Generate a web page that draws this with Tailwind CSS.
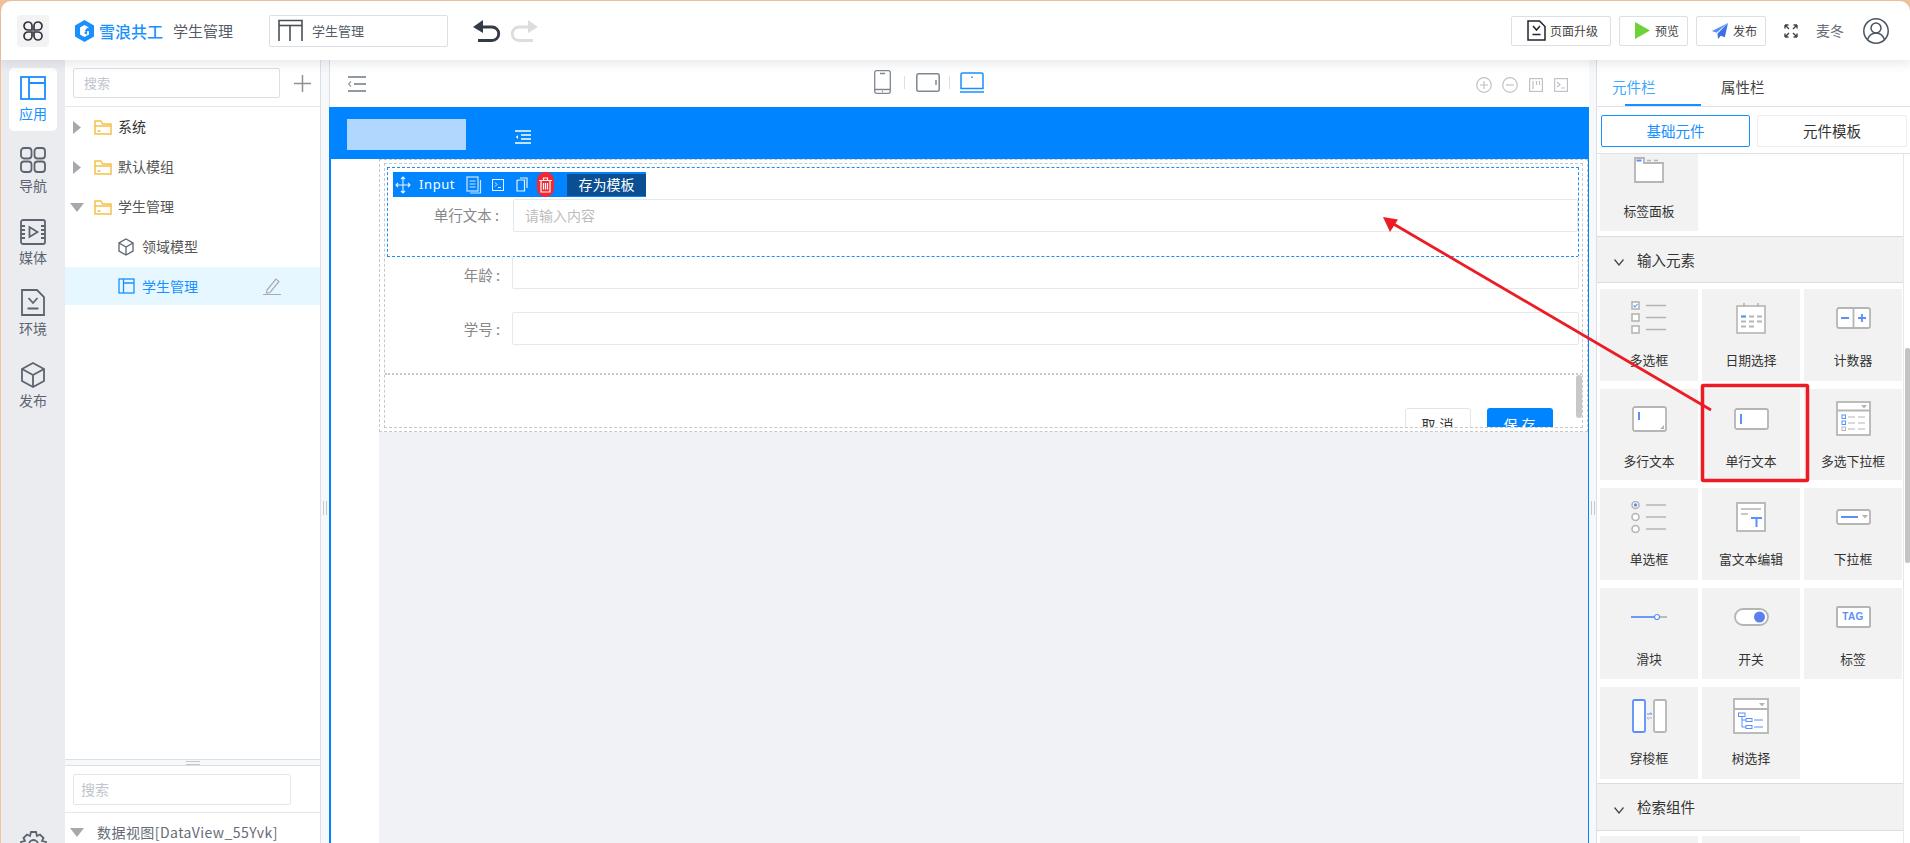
<!DOCTYPE html>
<html lang="zh-CN">
<head>
<meta charset="utf-8">
<title>学生管理</title>
<script src="https://cdn.jsdelivr.net/npm/@tailwindcss/browser@4"></script>
</head>
<body class="m-0 overflow-hidden bg-[#f2c49a]">
<div class="relative w-[1910px] h-[843px] overflow-hidden flex flex-col pl-px pt-px font-['Noto_Sans_CJK_SC','Noto_Sans',sans-serif] text-[#333] text-[14px]">

  <!-- top bar -->
  <header class="relative z-10 h-[59px] w-[1909px] shrink-0 bg-white rounded-tl-[10px] rounded-tr-[10px] shadow-[0_3px_12px_rgba(60,70,90,0.14)] flex items-center">
    <div class="ml-[16px] w-[32px] h-[32px] rounded-[4px] bg-[#f3f3f4] flex items-center justify-center">
      <svg width="20" height="20" viewBox="0 0 20 20" fill="none" stroke="#33363f" stroke-width="1.700"><path d="M9 9H5a4 4 0 1 1 4-4z"/><path d="M11 9h4a4 4 0 1 0-4-4z"/><path d="M9 11H5a4 4 0 1 0 4 4z"/><path d="M11 11h4a4 4 0 1 1-4 4z"/></svg>
    </div>
    <svg class="ml-[26px]" width="19" height="22" viewBox="0 0 19 22"><path d="M9.500 0 19 5.500v11L9.500 22 0 16.500v-11z" fill="#1890ff"/><path d="M14 7.500 9.500 5 5 7.600v6.800L9.500 17l4.500-2.600v-3.200H9.500l2-2.600z" fill="#fff"/><path d="M12 10.500 9 13l3 1.800z" fill="#1890ff"/></svg>
    <span class="ml-[5px] w-[64px] text-[16px] leading-[22px] font-medium text-[#1890ff] whitespace-nowrap">雪浪共工</span>
    <span class="ml-[10px] w-[60px] text-[15px] leading-[22px] text-[#555b66] whitespace-nowrap">学生管理</span>
    <div class="ml-[36px] w-[179px] h-[32px] border border-[#dcdfe6] rounded-[2px] flex items-center pl-[8px]">
      <svg width="25" height="23" viewBox="0 0 25 23" fill="none" stroke="#4a4f58" stroke-width="1.600"><path d="M1 22V1.500h23V22"/><path d="M1 6.500h23"/><path d="M12 6.500V22"/></svg>
      <span class="ml-[9px] text-[13px] text-[#555b66]">学生管理</span>
    </div>
    <svg class="ml-[25px]" width="28" height="22" viewBox="0 0 28 22" fill="none" stroke="#333a48" stroke-width="2.800"><path d="M8 7h11a6.600 6.600 0 0 1 0 13.500H5"/><path d="M10 0v13L0 7z" fill="#333a48" stroke="none"/></svg>
    <svg class="ml-[9px]" width="28" height="22" viewBox="0 0 28 22" fill="none" stroke="#dcdde0" stroke-width="2.800"><path d="M20 7H9a6.600 6.600 0 0 0 0 13.500h14"/><path d="M18 0v13L28 7z" fill="#dcdde0" stroke="none"/></svg>

    <div class="ml-auto flex items-center">
      <button class="w-[100px] h-[30px] border border-[#dcdfe6] rounded-[2px] flex items-center pl-[15px] text-[12px] text-[#444]">
        <svg width="19" height="21" viewBox="0 0 19 21" fill="none" stroke="#22252b" stroke-width="1.500"><path d="M1 1h11.500L18 6.500V20H1z"/><path d="m6 6 3.500 4L13 6M5.500 14.500h8"/></svg>
        <span class="ml-[4px]">页面升级</span>
      </button>
      <button class="ml-[8px] w-[69px] h-[30px] border border-[#dcdfe6] rounded-[2px] flex items-center pl-[15px] text-[12px] text-[#444]">
        <svg width="15" height="17" viewBox="0 0 15 17"><path d="M0 0 15 8.500 0 17z" fill="#6fd13a"/></svg>
        <span class="ml-[5px]">预览</span>
      </button>
      <button class="ml-[8px] w-[70px] h-[30px] border border-[#dcdfe6] rounded-[2px] flex items-center pl-[15px] text-[12px] text-[#444]">
        <svg width="16" height="16" viewBox="0 0 16 16"><path d="M16 0 0 8l4.500 1.800L16 0z" fill="#5b8ff9"/><path d="M16 0 5.500 10.500 6 16l2.800-3.300 4 1.600z" fill="#3f6fe8"/></svg>
        <span class="ml-[5px]">发布</span>
      </button>
      <svg class="ml-[18px]" width="14" height="14" viewBox="0 0 14 14" fill="none" stroke="#3d4450" stroke-width="1.400"><path d="M1 1l4 4M1 1v3.500M1 1h3.500M13 1 9 5M13 1v3.500M13 1H9.500M1 13l4-4M1 13V9.500M1 13h3.500M13 13 9 9M13 13V9.500M13 13H9.500"/></svg>
      <span class="ml-[18px] w-[28px] text-[14px] text-[#666c76] whitespace-nowrap">麦冬</span>
      <svg class="ml-[19px] mr-[21px]" width="26" height="26" viewBox="0 0 26 26" fill="none" stroke="#4a5562" stroke-width="1.500"><circle cx="13" cy="13" r="12.200"/><circle cx="13" cy="10" r="5"/><path d="M4.500 21.500c1.500-4 4.500-6.500 8.500-6.500s7 2.500 8.500 6.500"/></svg>
    </div>
  </header>

  <div class="flex flex-1 min-h-0 w-[1909px] bg-white">
    <!-- rail -->
    <nav class="w-[64px] shrink-0 bg-[#ebecf0] relative text-[#5c6470] text-[14px]">
      <div class="absolute left-[8px] top-[8px] w-[48px] h-[63px] bg-white rounded-[5px]"></div>
      <div class="relative flex flex-col items-center">
        <div class="h-[71px] pt-[16px] flex flex-col items-center text-[#1890ff]">
          <svg width="26" height="24" viewBox="0 0 26 24" fill="none" stroke="#1890ff" stroke-width="1.800"><rect x="1" y="1" width="24" height="22"/><path d="M9 1v22M9 7h16"/></svg>
          <span class="mt-[3px] leading-[20px]">应用</span>
        </div>
        <div class="h-[72px] pt-[16px] flex flex-col items-center">
          <svg width="26" height="26" viewBox="0 0 26 26" fill="none" stroke="#5c6470" stroke-width="1.800"><rect x="1" y="1" width="10.500" height="10.500" rx="3"/><rect x="14.500" y="1" width="10.500" height="10.500" rx="3"/><rect x="1" y="14.500" width="10.500" height="10.500" rx="3"/><rect x="14.500" y="14.500" width="10.500" height="10.500" rx="3"/></svg>
          <span class="mt-[2px] leading-[20px]">导航</span>
        </div>
        <div class="h-[70px] pt-[16px] flex flex-col items-center">
          <svg width="26" height="26" viewBox="0 0 26 26" fill="none" stroke="#5c6470" stroke-width="1.800"><rect x="1" y="1" width="24" height="24" rx="2"/><path d="M9.500 8v10l8-5z"/><path d="M1 7h4M1 11h4M1 15h4M1 19h4M21 7h4M21 11h4M21 15h4M21 19h4"/></svg>
          <span class="mt-[2px] leading-[20px]">媒体</span>
        </div>
        <div class="h-[71px] pt-[16px] flex flex-col items-center">
          <svg width="24" height="27" viewBox="0 0 24 27" fill="none" stroke="#5c6470" stroke-width="1.800"><path d="M1 1h15l7 7v18H1z"/><path d="m7.500 9 4.500 5 4.500-5M6.500 19.500h11"/></svg>
          <span class="mt-[2px] leading-[20px]">环境</span>
        </div>
        <div class="pt-[18px] flex flex-col items-center">
          <svg width="24" height="26" viewBox="0 0 24 26" fill="none" stroke="#5c6470" stroke-width="1.800"><path d="M12 1 23 7v12l-11 6L1 19V7z"/><path d="m1 7 11 6 11-6M12 13v12"/></svg>
          <span class="mt-[2px] leading-[20px]">发布</span>
        </div>
      </div>
      <svg class="absolute left-[19px] top-[771px]" width="27" height="27" viewBox="0 0 27 27" fill="none" stroke="#5c6470" stroke-width="1.800"><path d="M11 1h5l1 4 3-1.500 3.500 3.500-1.500 3 4 1v5l-4 1 1.500 3-3.500 3.500-3-1.500-1 4h-5l-1-4-3 1.500L3.500 20 5 17l-4-1v-5l4-1-1.500-3L7 3.500 10 5z"/><circle cx="13.500" cy="13.500" r="4.500"/></svg>
    </nav>

    <!-- tree panel -->
    <aside class="w-[256px] shrink-0 flex flex-col bg-white border-r border-[#dcdfe6]">
      <div class="h-[47px] shrink-0 border-b border-[#e4e6ea] flex items-center pl-[8px]">
        <div class="w-[207px] h-[30px] border border-[#dcdfe6] rounded-[2px] flex items-center pl-[10px] text-[13px] text-[#c0c4cc]">搜索</div>
        <svg class="ml-[14px]" width="17" height="17" viewBox="0 0 17 17" stroke="#8b9099" stroke-width="1.500"><path d="M8.500 0v17M0 8.500h17"/></svg>
      </div>
      <ul class="flex-1 text-[14px]">
        <li class="h-[40px] flex items-center pl-[8px]"><svg width="8" height="13" viewBox="0 0 8 13"><path d="M0 0 8 6.500 0 13z" fill="#a6a8ad"/></svg><svg class="ml-[13px]" width="18" height="15" viewBox="0 0 18 15" fill="none" stroke="#f7c04a" stroke-width="1.500"><path d="M1 1h6l1.500 3H17v10H1zM1 6h16M3.500 11h3"/></svg><span class="ml-[6px] text-[#333] mb-[1px]">系统</span></li>
        <li class="h-[40px] flex items-center pl-[8px]"><svg width="8" height="13" viewBox="0 0 8 13"><path d="M0 0 8 6.500 0 13z" fill="#a6a8ad"/></svg><svg class="ml-[13px]" width="18" height="15" viewBox="0 0 18 15" fill="none" stroke="#f7c04a" stroke-width="1.500"><path d="M1 1h6l1.500 3H17v10H1zM1 6h16M3.500 11h3"/></svg><span class="ml-[6px] text-[#555] mb-[1px]">默认模组</span></li>
        <li class="h-[40px] flex items-center pl-[5px]"><svg width="14" height="9" viewBox="0 0 14 9"><path d="M0 0h14L7 9z" fill="#a6a8ad"/></svg><svg class="ml-[10px]" width="18" height="15" viewBox="0 0 18 15" fill="none" stroke="#f7c04a" stroke-width="1.500"><path d="M1 1h6l1.500 3H17v10H1zM1 6h16M3.500 11h3"/></svg><span class="ml-[6px] text-[#555] mb-[1px]">学生管理</span></li>
        <li class="h-[40px] flex items-center pl-[53px]"><svg width="16" height="18" viewBox="0 0 16 18" fill="none" stroke="#5c6470" stroke-width="1.300"><path d="M8 1 15 5v8l-7 4-7-4V5z"/><path d="m1 5 7 4 7-4M8 9v8"/></svg><span class="ml-[8px] text-[#555] mb-[1px]">领域模型</span></li>
        <li class="h-[38px] flex items-center pl-[53px] bg-[#e6f7ff] text-[#1890ff]"><svg width="17" height="16" viewBox="0 0 17 16" fill="none" stroke="#1890ff" stroke-width="1.300"><rect x="1" y="1" width="15" height="14"/><path d="M5.500 1v14M5.500 5H16"/></svg><span class="ml-[7px]">学生管理</span><svg class="ml-[65px]" width="18" height="18" viewBox="0 0 18 18" fill="none" stroke="#a8acb2" stroke-width="1.200"><path d="M4 13 13 2l3 2.500L7 15.500l-3.500.5zM0 17.500h18"/></svg></li>
      </ul>
      <div class="h-[7px] shrink-0 bg-[#f7f8fa] border-y border-[#dcdfe6] flex flex-col items-center justify-center gap-[2px]"><span class="block w-[14px] h-px bg-[#c4c7cc]"></span><span class="block w-[14px] h-px bg-[#c4c7cc]"></span></div>
      <div class="h-[47px] shrink-0 border-b border-[#e4e6ea] pl-[8px] pt-[8px]">
        <div class="w-[218px] h-[31px] border border-[#e4e6ea] rounded-[2px] flex items-center pl-[7px] text-[14px] text-[#c0c4cc]">搜索</div>
      </div>
      <div class="h-[30px] shrink-0 flex items-start pl-[5px] pt-[9px] text-[14px] text-[#666c76] leading-[20px] tracking-[0.45px]">
        <svg class="mt-[6px]" width="14" height="9" viewBox="0 0 14 9"><path d="M0 0h14L7 9z" fill="#a6a8ad"/></svg>
        <span class="ml-[13px] whitespace-nowrap">数据视图[DataView_55Yvk]</span>
      </div>
    </aside>

    <!-- left splitter -->
    <div class="w-[8px] shrink-0 bg-[#f7f8fa] flex items-center justify-center gap-[2px] pt-[112px]"><span class="block w-px h-[14px] bg-[#c4c7cc]"></span><span class="block w-px h-[14px] bg-[#c4c7cc]"></span></div>

    <!-- canvas -->
    <main class="w-[1260px] shrink-0 flex flex-col">
      <div class="h-[47px] shrink-0 bg-white relative flex items-center border-l border-[#dcdfe6]">
        <svg class="ml-[18px]" width="18" height="16" viewBox="0 0 18 16" fill="none" stroke="#9199a3" stroke-width="1.800"><path d="M0 1h18M6 8h12M0 15h18"/><path d="M3 5.500 0.500 8 3 10.500" stroke-width="1.200"/></svg>
        <div class="absolute left-[544px] top-[10px] flex items-center">
          <svg width="17" height="24" viewBox="0 0 17 24" fill="none" stroke="#7f8790" stroke-width="1.300"><rect x="0.700" y="0.700" width="15.600" height="22.600" rx="2"/><path d="M0.700 19.500h15.600M6 3.500h5"/><path d="M8 21.500h1"/></svg>
          <span class="ml-[13px] block w-px h-[13px] bg-[#dcdfe6]"></span>
          <svg class="ml-[11px]" width="24" height="19" viewBox="0 0 24 19" fill="none" stroke="#7f8790" stroke-width="1.500"><rect x="0.800" y="0.800" width="22.400" height="17.400" rx="2"/><path d="M20 7v5"/></svg>
          <span class="ml-[9px] block w-px h-[13px] bg-[#dcdfe6]"></span>
          <svg class="ml-[10px]" width="24" height="21" viewBox="0 0 24 21" fill="none" stroke="#1890ff" stroke-width="1.500"><path d="M1 16.500V3a2 2 0 0 1 2-2h18a2 2 0 0 1 2 2v13.500z"/><path d="M12 4.500v1.500M0 20h24"/></svg>
        </div>
        <div class="absolute left-[1146px] top-[17px] flex items-center">
          <svg width="16" height="16" viewBox="0 0 16 16" fill="none" stroke="#bfc2c7" stroke-width="1.200"><circle cx="8" cy="8" r="7.300"/><path d="M8 4v8M4 8h8"/></svg>
          <svg class="ml-[10px]" width="16" height="16" viewBox="0 0 16 16" fill="none" stroke="#bfc2c7" stroke-width="1.200"><circle cx="8" cy="8" r="7.300"/><path d="M4 8h8"/></svg>
          <svg class="ml-[11px]" width="14" height="14" viewBox="0 0 14 14" fill="none" stroke="#bfc2c7" stroke-width="1.200"><rect x="0.600" y="0.600" width="12.800" height="12.800"/><path d="M4 3v8M7.500 3v4M10.500 3v4"/></svg>
          <svg class="ml-[11px]" width="14" height="14" viewBox="0 0 14 14" fill="none" stroke="#bfc2c7" stroke-width="1.200"><rect x="0.600" y="0.600" width="12.800" height="12.800"/><path d="m3 4 3 2.500L3 9M7 10h4"/></svg>
        </div>
      </div>
      <div class="h-[52px] shrink-0 bg-[#0084ff] pl-[18px] pt-[12px] flex items-start">
        <div class="w-[119px] h-[31px] bg-[#b0d8ff]"></div>
        <svg class="ml-[49px] mt-[11px]" width="16" height="14" viewBox="0 0 16 14" fill="none" stroke="#fff" stroke-width="1.400"><path d="M0 1h16M6 5h10M6 9h10M0 13h16"/><path d="M3 5 .8 7 3 9z" fill="#fff" stroke="none"/></svg>
      </div>
      <div class="flex-1 flex border-l-2 border-[#0084ff] border-r border-r-[#0084ff] bg-[#f0f2f5] min-h-0">
        <div class="w-[48px] shrink-0 bg-white"></div>
        <div class="flex-1 h-[273px] border border-dashed border-[#c8c8c8] bg-white px-[4px] py-[3px]">
          <div class="relative h-full border border-dashed border-[#c8c8c8] overflow-hidden">
            <div class="relative h-[90px] ml-[2px] mt-[3px] mr-[3px] border border-dashed border-[#1890ff]">
              <div class="absolute z-[2] left-[5px] top-[4px] w-[253px] h-[25px] bg-[#0084ff] flex items-center text-white">
                <svg class="ml-[2px]" width="16" height="18" viewBox="0 0 16 18" fill="none" stroke="#e6f3ff" stroke-width="1.100"><path d="M8 1v16M1 9h14M6 3l2-2 2 2M6 15l2 2 2-2M3 7 1 9l2 2M13 7l2 2-2 2"/></svg>
                <span class="ml-[8px] w-[36px] text-[13px] tracking-[0.6px] font-['Noto_Sans',sans-serif]">Input</span>
                <svg class="ml-[11px]" width="16" height="18" viewBox="0 0 16 18" fill="none" stroke="#cfe6ff" stroke-width="1.200"><rect x="1" y="1" width="11" height="14"/><path d="M3.500 5h6M3.500 8h6M3.500 11h6M14.500 4v13H4"/></svg>
                <svg class="ml-[10px]" width="12" height="12" viewBox="0 0 12 12" fill="none" stroke="#e6f3ff" stroke-width="1"><rect x="0.500" y="0.500" width="11" height="11"/><path d="m3 3.500 2 2-2 2M6 8.500h3"/></svg>
                <svg class="ml-[12px]" width="12" height="15" viewBox="0 0 12 15" fill="none" stroke="#e6f3ff" stroke-width="1.200"><path d="M3 3h5.500v11H1V3.500zM4 1h7v10"/></svg>
                <span class="ml-[9px] w-[17px] h-[25px] bg-[#f7262f] rounded-[9px] flex items-center justify-center"><svg width="13" height="16" viewBox="0 0 13 16" fill="none" stroke="#fff" stroke-width="1.200"><path d="M0 3.500h13M4.500 3V1h4v2M2 3.500V15h9V3.500M4.500 6v6.500M6.500 6v6.500M8.500 6v6.500"/></svg></span>
                <span class="ml-[13px] w-[79px] h-[22px] bg-[#0a4f94] flex items-center justify-center text-[14px] text-white">存为模板</span>
              </div>
              <div class="absolute left-[125px] top-[31px] w-[1065px] h-[33px] border border-[#e8e8e8] rounded-[2px] flex items-center pl-[11px] text-[14px] text-[#bdbdbd]">请输入内容</div>
              <span class="absolute right-[1079px] top-[37px] leading-[20px] text-[14.500px] text-[#888] whitespace-nowrap">单行文本 :</span>
            </div>
            <div class="relative h-[116px] text-[#888]">
              <span class="absolute right-[1082px] top-[8px] leading-[20px] text-[14.500px] whitespace-nowrap">年龄 :</span>
              <div class="absolute left-[127px] top-[-1px] w-[1067px] h-[33px] border border-[#e8e8e8] border-t-0 rounded-b-[2px]"></div>
              <span class="absolute right-[1082px] top-[62px] leading-[20px] text-[14.500px] whitespace-nowrap">学号 :</span>
              <div class="absolute left-[127px] top-[55px] w-[1067px] h-[33px] border border-[#e8e8e8] rounded-[2px]"></div>
            </div>
            <div class="relative h-[60px] border-t-2 border-dotted border-[#c8c8c8] flex justify-end pt-[33px] pr-[29px] gap-[16px]">
              <button class="w-[66px] h-[32px] border border-[#e4e4e4] rounded-[3px] bg-white text-[14px] text-[#333] tracking-[4px] pl-[3px]">取消</button>
              <button class="w-[66px] h-[32px] rounded-[3px] bg-[#0084ff] text-[14px] text-white tracking-[4px] pl-[3px]">保存</button>
              <span class="absolute right-0 top-[0px] w-[6px] h-[43px] bg-[#c8c8c8] rounded-[3px]"></span>
            </div>
          </div>
        </div>
      </div>
    </main>

    <!-- right splitter -->
    <div class="w-[8px] shrink-0 bg-[#f7f8fa] border-r border-[#dcdfe6] flex items-center justify-center gap-[2px] pt-[112px]"><span class="block w-px h-[14px] bg-[#c4c7cc]"></span><span class="block w-px h-[14px] bg-[#c4c7cc]"></span></div>

    <!-- right panel -->
    <aside class="relative flex-1 min-w-0 flex flex-col bg-white text-[#333]">
      <div class="h-[47px] shrink-0 relative border-b border-[#dfe1e5] text-[14.500px]">
        <span class="absolute left-[15px] top-[17px] leading-[20px] text-[#40a9ff]">元件栏</span>
        <span class="absolute left-[124px] top-[17px] leading-[20px] text-[#444]">属性栏</span>
        <span class="absolute left-[28px] bottom-0 w-[76px] h-[2px] bg-[#1890ff]"></span>
      </div>
      <div class="h-[47px] shrink-0 border-b border-[#dfe1e5] flex items-start pl-[4px] pt-[8px] gap-[7px] text-[14.500px]">
        <div class="w-[149px] h-[32px] border border-[#1890ff] rounded-[2px] text-[#1890ff] flex items-center justify-center">基础元件</div>
        <div class="w-[150px] h-[32px] border border-[#eeeeee] rounded-[2px] flex items-center justify-center">元件模板</div>
      </div>
      <div class="flex-1 min-h-0 overflow-hidden w-[307px] border-r border-[#e8e8e8] text-[12.800px]">
        <div class="pl-[3px] h-[77px]">
          <div class="w-[98px] h-[77px] bg-[#f2f2f2] flex flex-col items-center">
            <svg class="mt-[3px]" width="30" height="26" viewBox="0 0 30 26" fill="#fff" stroke="#b5b5b5" stroke-width="1.800"><path d="M1 1h9v5h19v19H1z"/><path d="M2.500 3.500h5" stroke="#5b8ff9" stroke-width="2"/><path d="M13 3.500h4M20 3.500h4" stroke-width="1.500"/></svg>
            <span class="mt-[18px] leading-[20px]">标签面板</span>
          </div>
        </div>
        <div class="mt-[5px] h-[47px] bg-[#f2f2f2] border-y border-[#dcdcdc] flex items-center pl-[17px] text-[14.500px]">
          <svg width="10" height="7" viewBox="0 0 10 7" fill="none" stroke="#444" stroke-width="1.200" class="mt-[6px]"><path d="m.5.500 4.500 5.500L9.500.500"/></svg>
          <span class="ml-[13px]">输入元素</span>
        </div>
        <div class="mt-[6px] pl-[3px] grid grid-cols-[98px_98px_98px] gap-x-[4px] gap-y-[8px] auto-rows-[91.500px]">
          <div class="bg-[#f2f2f2] flex flex-col items-center"><div class="h-[58px] flex items-center"><svg width="36" height="34" viewBox="0 0 36 34" fill="none" stroke="#b5b5b5" stroke-width="1.600"><rect x="1" y="1" width="7" height="7" fill="#fff"/><path d="m2.500 4.500 1.500 1.500 2.500-3" stroke="#5b8ff9" stroke-width="1.100"/><rect x="1" y="13" width="7" height="7" fill="#fff"/><rect x="1" y="25" width="7" height="7" fill="#fff"/><path d="M15 4.500h20M15 16.500h20M15 28.500h20"/></svg></div><span class="mt-[3px] leading-[20px]">多选框</span></div>
          <div class="bg-[#f2f2f2] flex flex-col items-center"><div class="h-[58px] flex items-center"><svg width="30" height="31" viewBox="0 0 30 31" fill="#fff" stroke="#b5b5b5" stroke-width="1.600"><rect x="1" y="3" width="28" height="27"/><path d="M8 0v4M22 0v4"/><path d="M5 13.500h5" stroke="#5b8ff9" stroke-width="2.200"/><path d="M13 13.500h5M21 13.500h5M5 18.500h5M13 18.500h5M21 18.500h5M5 23.500h5M13 23.500h5" stroke-width="2"/></svg></div><span class="mt-[3px] leading-[20px]">日期选择</span></div>
          <div class="bg-[#f2f2f2] flex flex-col items-center"><div class="h-[58px] flex items-center"><svg width="35" height="22" viewBox="0 0 35 22" fill="#fff" stroke="#b5b5b5" stroke-width="1.800"><rect x="1" y="1" width="33" height="20" rx="2"/><path d="M17.500 1v20"/><path d="M5 11h8M22 11h8M26 7v8" stroke="#5b8ff9" stroke-width="1.800"/></svg></div><span class="mt-[3px] leading-[20px]">计数器</span></div>

          <div class="bg-[#f2f2f2] flex flex-col items-center"><div class="h-[60px] flex items-center"><svg width="35" height="26" viewBox="0 0 35 26" fill="#fff" stroke="#b5b5b5" stroke-width="1.800"><rect x="1" y="1" width="33" height="24" rx="2"/><path d="M7 6v8" stroke="#5b8ff9" stroke-width="2"/><path d="M32 19v4h-4z" fill="#b5b5b5" stroke="none"/></svg></div><span class="mt-[2px] leading-[20px]">多行文本</span></div>
          <div class="bg-[#f2f2f2] flex flex-col items-center"><div class="h-[60px] flex items-center"><svg width="35" height="22" viewBox="0 0 35 22" fill="#fff" stroke="#b5b5b5" stroke-width="1.800"><rect x="1" y="1" width="33" height="20" rx="2"/><path d="M7 6v10" stroke="#5b8ff9" stroke-width="2"/></svg></div><span class="mt-[2px] leading-[20px]">单行文本</span></div>
          <div class="bg-[#f2f2f2] flex flex-col items-center"><div class="h-[60px] flex items-center"><svg width="35" height="35" viewBox="0 0 35 35" fill="#fff" stroke="#b5b5b5" stroke-width="1.800"><rect x="1" y="1" width="33" height="33"/><path d="M1 9.500h33"/><path d="M25 4h6l-3 3.500z" fill="#b5b5b5" stroke="none"/><rect x="6" y="14" width="3.500" height="3.500" stroke-width="1" stroke="#5b8ff9"/><rect x="6" y="20" width="3.500" height="3.500" stroke-width="1" stroke="#5b8ff9"/><rect x="6" y="26" width="3.500" height="3.500" stroke-width="1"/><path d="M12 16h7M22 16h7M12 22h7M22 22h7M12 28h7M22 28h7" stroke-width="1.200"/></svg></div><span class="mt-[2px] leading-[20px]">多选下拉框</span></div>

          <div class="bg-[#f2f2f2] flex flex-col items-center"><div class="h-[58px] flex items-center"><svg width="36" height="32" viewBox="0 0 36 32" fill="none" stroke="#b5b5b5" stroke-width="1.600"><circle cx="4.500" cy="4" r="3.500" fill="#fff"/><circle cx="4.500" cy="4" r="1.800" fill="#5b8ff9" stroke="none"/><circle cx="4.500" cy="16" r="3.500" fill="#fff"/><circle cx="4.500" cy="28" r="3.500" fill="#fff"/><path d="M15 4h20M15 16h20M15 28h20"/></svg></div><span class="mt-[3px] leading-[20px]">单选框</span></div>
          <div class="bg-[#f2f2f2] flex flex-col items-center"><div class="h-[58px] flex items-center"><svg width="30" height="30" viewBox="0 0 30 30" fill="#fff" stroke="#b5b5b5" stroke-width="1.800"><rect x="1" y="1" width="28" height="28"/><path d="M5 7h20M5 12h7" stroke-width="1.400"/><path d="M15 16h11M20.500 16v9" stroke="#5b8ff9" stroke-width="2"/></svg></div><span class="mt-[3px] leading-[20px]">富文本编辑</span></div>
          <div class="bg-[#f2f2f2] flex flex-col items-center"><div class="h-[58px] flex items-center"><svg width="35" height="16" viewBox="0 0 35 16" fill="#fff" stroke="#b5b5b5" stroke-width="1.800"><rect x="1" y="1" width="33" height="14" rx="2"/><path d="M5 8h17" stroke="#5b8ff9" stroke-width="2"/><path d="M26 6h6l-3 3.500z" fill="#b5b5b5" stroke="none"/></svg></div><span class="mt-[3px] leading-[20px]">下拉框</span></div>

          <div class="bg-[#f2f2f2] flex flex-col items-center"><div class="h-[58px] flex items-center"><svg width="36" height="8" viewBox="0 0 36 8" fill="none" stroke-width="1.800"><path d="M0 4h26" stroke="#5b8ff9"/><path d="M29 4h7" stroke="#b5b5b5"/><circle cx="26" cy="4" r="2.500" fill="#fff" stroke="#5b8ff9" stroke-width="1.200"/></svg></div><span class="mt-[3px] leading-[20px]">滑块</span></div>
          <div class="bg-[#f2f2f2] flex flex-col items-center"><div class="h-[58px] flex items-center"><svg width="35" height="18" viewBox="0 0 35 18" fill="#fff" stroke="#b5b5b5" stroke-width="1.800"><rect x="1" y="1" width="33" height="16" rx="8"/><circle cx="25.500" cy="9" r="5.500" fill="#5b7ff0" stroke="none"/></svg></div><span class="mt-[3px] leading-[20px]">开关</span></div>
          <div class="bg-[#f2f2f2] flex flex-col items-center"><div class="h-[58px] flex items-center"><div class="w-[35px] h-[22px] bg-white border-2 border-[#b5b5b5] rounded-[2px] flex items-center justify-center text-[10px] font-bold text-[#5b8ff9] font-['Liberation_Sans',sans-serif] tracking-[0.3px]">TAG</div></div><span class="mt-[3px] leading-[20px]">标签</span></div>

          <div class="bg-[#f2f2f2] flex flex-col items-center"><div class="h-[58px] flex items-center"><svg width="35" height="34" viewBox="0 0 35 34" fill="#fff" stroke-width="1.800"><rect x="1" y="1" width="12" height="32" rx="1.500" stroke="#5b8ff9"/><rect x="22" y="1" width="12" height="32" rx="1.500" stroke="#b5b5b5"/><path d="M15 15h5l-1.500-1.500" fill="none" stroke="#5b8ff9" stroke-width="1"/><path d="M20 19h-5l1.500 1.500" fill="none" stroke="#b5b5b5" stroke-width="1"/></svg></div><span class="mt-[3px] leading-[20px]">穿梭框</span></div>
          <div class="bg-[#f2f2f2] flex flex-col items-center"><div class="h-[58px] flex items-center"><svg width="36" height="36" viewBox="0 0 36 36" fill="#fff" stroke="#b5b5b5" stroke-width="1.800"><rect x="1" y="1" width="34" height="34"/><path d="M1 11h34"/><path d="M26 5h6l-3 3.500z" fill="#b5b5b5" stroke="none"/><path d="M9 17v12h4M9 22h4" fill="none" stroke="#5b8ff9" stroke-width="1"/><rect x="5.500" y="15" width="6.500" height="3.500" stroke="#5b8ff9" stroke-width="1"/><rect x="13" y="20.500" width="6" height="3" stroke="#5b8ff9" stroke-width="1"/><rect x="13" y="27.500" width="6" height="3" stroke="#5b8ff9" stroke-width="1"/><path d="M21 22h9M21 29h9" stroke="#5b8ff9" stroke-width="1"/></svg></div><span class="mt-[3px] leading-[20px]">树选择</span></div>
        </div>
        <div class="mt-[4.500px] h-[48px] bg-[#f2f2f2] border-y border-[#dcdcdc] flex items-center pl-[17px] text-[14.500px]">
          <svg width="10" height="7" viewBox="0 0 10 7" fill="none" stroke="#444" stroke-width="1.200" class="mt-[6px]"><path d="m.5.500 4.500 5.500L9.500.500"/></svg>
          <span class="ml-[13px]">检索组件</span>
        </div>
        <div class="mt-[5px] pl-[3px] grid grid-cols-[98px_98px_98px] gap-x-[4px] h-[20px]">
          <div class="bg-[#f2f2f2]"></div><div class="bg-[#f2f2f2]"></div>
        </div>
      </div>
      <span class="absolute right-0 top-[288px] w-[5px] h-[215px] bg-[#c4c4c4] rounded-[2px]"></span>
    </aside>
  </div>

  <!-- annotation: red box and arrow over the page -->
  <svg class="absolute left-0 top-0 z-20 pointer-events-none" width="1910" height="843" viewBox="0 0 1910 843">
    <rect x="1702.500" y="385.500" width="105" height="95" rx="1" fill="none" stroke="#ed1c24" stroke-width="3.500"/>
    <path d="M1711 410 1391 222.500" fill="none" stroke="#ed1c24" stroke-width="2.800"/>
    <path d="M1383 217 1398 219.500 1390 232z" fill="#ed1c24"/>
  </svg>
</div>
</body>
</html>
